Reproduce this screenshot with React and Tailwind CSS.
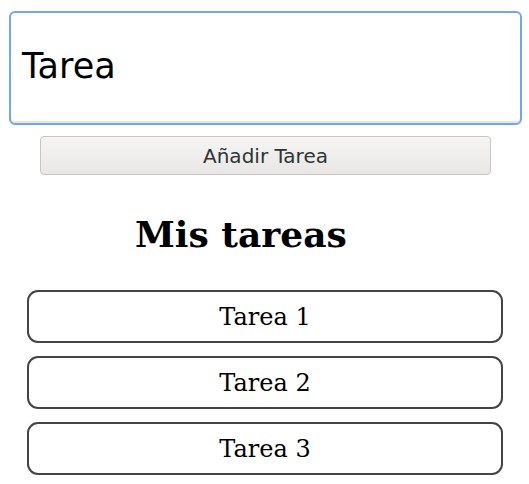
export default function App() {
  const tasks = ["Tarea 1", "Tarea 2", "Tarea 3"];
  return (
    <div className="w-[529px] h-[484px] bg-white overflow-hidden pt-[11px]">
      <div className="pl-[9px] pr-[7px]">
        <div className="h-[114px] rounded-[6px] border-2 border-[#74a6ee] shadow-[inset_0_-2px_0_#e6e6e6] flex items-center pl-[11px] pb-[3px] font-['DejaVu_Sans',sans-serif] text-[35px] text-black">
          Tarea
        </div>
      </div>
      <div className="mt-[11px] pl-[40px] pr-[38px]">
        <button className="w-full h-[39px] rounded-[4px] border border-[#c9c6c2] bg-gradient-to-b from-[#f6f5f4] to-[#e9e7e5] font-['DejaVu_Sans',sans-serif] text-[20px] text-[#2e3436] flex items-center justify-center">
          Añadir Tarea
        </button>
      </div>
      <h2 className="mt-[37px] pl-[135px] font-['DejaVu_Serif',serif] font-bold text-[36px] leading-[44px] text-black">
        Mis tareas
      </h2>
      <ul className="mt-[34px] pl-[27px] pr-[26px] flex flex-col gap-[13px]">
        {tasks.map((t) => (
          <li
            key={t}
            className="h-[53px] rounded-[11px] border-2 border-[#444] flex items-center justify-center font-['DejaVu_Serif',serif] text-[24px] text-black"
          >
            {t}
          </li>
        ))}
      </ul>
    </div>
  );
}
